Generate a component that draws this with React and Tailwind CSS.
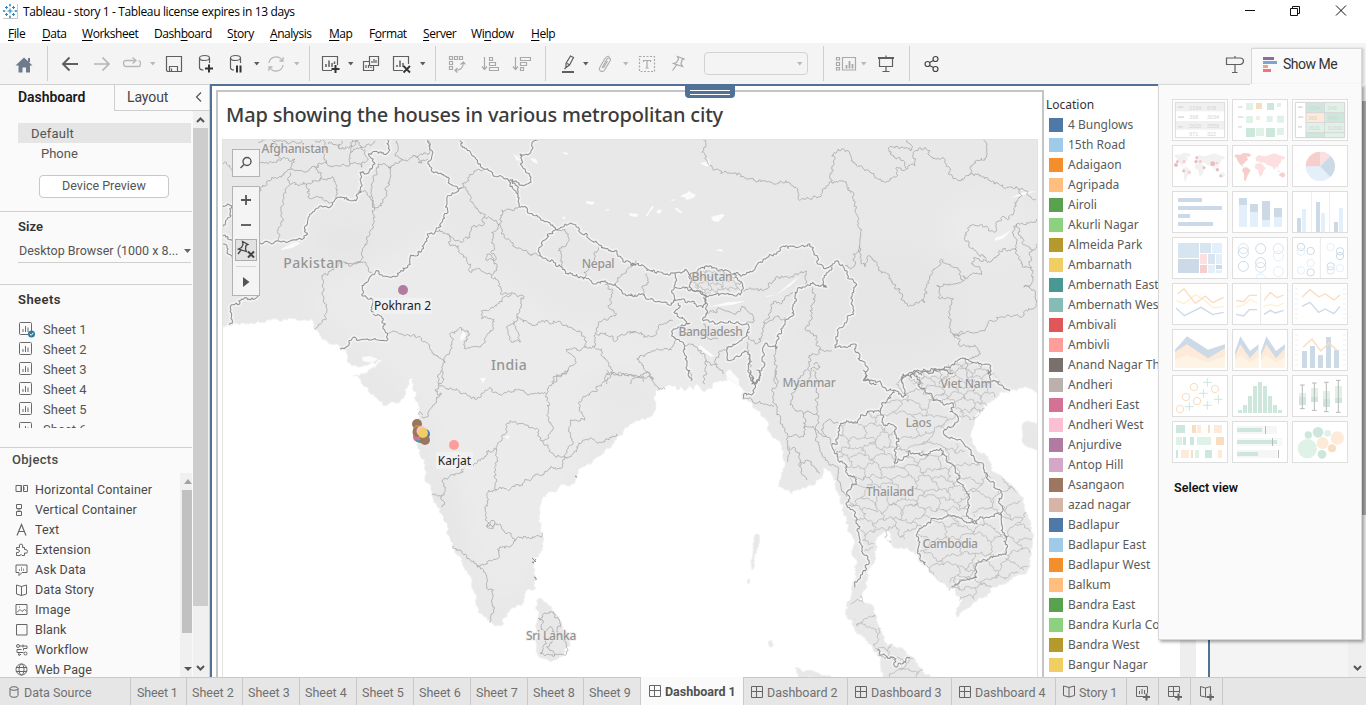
import React from 'react';

/* ---------- map geometry ---------- */

function rng(seed) {
  let s = seed;
  return () => {
    s = (s * 16807) % 2147483647;
    return s / 2147483647 - 0.5;
  };
}

const parse = (str) => str.trim().split(/\s+/).map((p) => p.split(',').map(Number));

// Subdivides every segment with a random midpoint shift so that lines look like surveyed borders.
// The shift is capped for long segments, which keeps the general course of the line.
function jag(points, seed, amp) {
  const r = rng(seed);
  const out = [points[0]];
  const split = (a, b, depth) => {
    const dx = b[0] - a[0];
    const dy = b[1] - a[1];
    const len = Math.hypot(dx, dy);
    if (len < 2.2 || depth > 6) {
      out.push(b);
      return;
    }
    const k = r() * Math.min(amp * 3.2, 4.5 / len);
    const m = [(a[0] + b[0]) / 2 - dy * k, (a[1] + b[1]) / 2 + dx * k];
    split(a, m, depth + 1);
    split(m, b, depth + 1);
  };
  for (let i = 1; i < points.length; i++) split(points[i - 1], points[i], 0);
  return out.map((p, i) => (i ? 'L' : 'M') + p[0].toFixed(1) + ' ' + p[1].toFixed(1)).join('');
}

// Border sheets are digitised in thirds of a unit from a local origin.
const sheet = (ox, oy, lines, seed, amp) =>
  lines.map((l, i) => jag(parse(l).map(([x, y]) => [ox + x / 3, oy + y / 3]), seed + i * 77, amp)).join('');

const MAINLAND = jag(parse(`222,326 245,324 262,322 290,318 312,319 315,329 328,342 343,349 347,361 358,367 370,364 382,360 376,368 364,373 353,376
 369,392 385,406 396,403 403,398 407,388 409,380 413,379 417,393 419,410 420,417 414,423 413,433 417,441 420,450 425,470 432,495 440,508 448,530 453,547
 463,563 472,580 478,607 487,620 495,626 503,622 510,610 522,605 527,590 536,588 535,570 533,562 538,557 543,537 540,513 542,498 547,493 555,492 560,485
 575,483 578,473 592,463 605,450 617,437 632,423 653,413 655,392 675,385 678,390 681,385 685,391 688,386 693,390 697,384 700,387 704,392 708,389 717,382 730,378 738,385 745,398 763,417 772,437 782,447 785,467
 778,487 792,494 807,487 822,478 823,468 833,477 838,493 842,510 848,527 853,547 855,570 854,583 850,600 847,617 852,625 863,637 873,650 880,663 883,679
 932,679 918,665 912,657 900,647 887,645 882,633 877,617 872,605 863,603 862,593 867,573 875,557 877,537 884,532 890,533 893,547 907,547 917,555 930,573 940,582 953,587
 960,597 957,617 967,608 987,597 990,588 1010,580 1030,567 1033,543 1030,520 1023,500 1010,485 993,472 983,453 972,442 975,420 987,403 1000,392
 1010,391 1023,388 1040,393`), 41, 0.18) + 'L1040 137L220 137Z';

const ISLANDS = [
  '537,600 541,598 547,603 554,612 562,624 569,636 570,646 563,656 550,662 540,658 536,645 536,628 539,613 537,600',
  '1022,425 1030,422 1038,423 1038,450 1028,447 1022,440 1022,425',
  '795,668 803,672 815,672 830,675 836,679 800,679 795,668',
  '756,534 758,534 757,550 754,560 752,570 751,563 753,548 756,534',
  '748,579 750,580 749,584 747,583 748,579',
  '769,641 772,641 773,646 770,647 769,641',
].map((s, i) => jag(parse(s), 91 + i, 0.12) + 'Z').join('');

const HEAVY =
  sheet(215, 84, [
    '135,477 170,480 188,470 230,468 278,450 280,400 310,372 350,365 372,340 415,350 430,330 435,265 462,262 480,240 475,225 460,210 490,208 520,205 522,188 518,168',
    '22,362 50,370 48,395 24,430', '22,460 52,470', '24,480 36,508 52,522',
    '130,637 80,645 74,660 55,662 50,690 42,722',
    '640,168 645,230 650,262 700,280 700,296 738,312 698,335 698,380 663,438 637,450 620,500 585,520 578,545 555,565 510,577 500,572 490,560 472,572 442,612 440,632 468,642 475,690 500,698 518,748 515,770 490,768 402,770 400,785 375,795',
    '735,170 738,185 780,220 808,256 835,275 870,285 887,296 908,330 912,365 960,395 1000,415 1022,436 1050,420 1090,430 1150,480 1200,500 1230,535 1262,545',
    '880,290 925,305 946,285 930,255 916,240 915,210 948,200 950,180 968,168',
    '1022,436 998,450 975,490 975,515 1040,550 1060,570 1105,585 1140,600 1170,590 1200,600 1230,630 1262,632',
    '890,285 908,330',
  ], 500, 0.25) +
  sheet(630, 84, [
    '0,543 60,560 100,570 130,568 165,556 176,570 180,600 225,632 335,625 335,595 310,570 270,558 240,545 205,555 180,585',
    '310,570 335,576 370,560 400,525 440,510 465,488 540,480 560,535 600,548 622,530 645,560 662,585 672,595 672,680 625,735 615,792 675,780 690,830 712,848 700,890 740,900',
    '135,568 132,610 130,650', '135,610 180,620 222,632 218,672',
    '0,630 60,645 130,655 165,650 218,672', '145,657 132,685 180,718 135,735 133,760 165,785 170,830 185,890',
    '220,640 220,710 255,720 350,720 358,745 325,775 295,788 298,830 325,818 345,800 355,850 365,900 388,880 402,785 438,795',
    '438,795 465,710 490,680 495,625 530,605 580,600 590,610 583,575 605,548',
    '820,900 820,870 845,882 862,858 900,862 960,850 1005,822 1080,850 1075,872',
  ], 900, 0.25) +
  sheet(700, 370, [
    '150,0 155,75 135,70 133,88', '170,0 180,25 165,42 155,20',
    '490,0 495,30 545,45 560,62 583,60 610,82 610,50 605,20 638,10 700,92 760,100 750,125 775,150 730,185 790,220 850,290 870,335 905,370 905,435 840,440 832,462 780,445 700,445 652,490 655,535 675,585',
    '638,10 665,15 700,2 760,8', '860,0 870,25 930,62',
    '583,60 552,98 540,125 500,130 472,158 422,160 412,222 395,225 440,300 470,343 455,350 438,402 480,470 488,530 508,578 465,635 465,652',
    '540,125 550,160 588,172 592,230 583,278 630,242 690,250 722,235 765,290 772,335 808,372 805,440 825,462',
    '905,435 910,552 860,572 828,580 830,622 800,630 755,648',
    '530,840 540,855 580,862 585,890 610,880 630,862',
  ], 1300, 0.25);

const LIGHT =
  sheet(215, 84, [
    '22,240 45,245 60,275', '130,325 165,290 200,280 230,255 270,265 310,245 335,240 350,250 365,245 405,240 408,205 430,170',
    '230,255 240,225 200,225 170,235 130,245', '225,300 225,265', '190,468 200,400 205,330 240,295 275,300 300,290 355,280 368,330 365,345',
    '275,300 280,335 310,340 350,355', '310,245 315,290', '340,180 375,195 405,190', '375,195 380,170', '405,240 440,250 460,225 440,190 405,205',
    '130,175 180,172 220,180 260,170', '180,172 200,225', '300,170 330,180 335,240', '405,190 420,170 440,190 460,180 480,170',
    '430,330 455,325 475,350 480,372', '640,170 636,210 600,215 560,225 520,250 525,300 515,320 500,365 480,372 465,440 450,480 445,520 435,535 388,535',
    '480,372 470,300 490,240 530,250', '545,170 540,215 560,225', '600,215 610,235 640,225', '435,535 455,545 472,568',
    '435,535 390,535 320,575 325,650 335,685 322,715 298,735',
    '738,312 755,295 765,270 785,258 808,256',
    '738,312 760,330 775,360 810,390 808,420 770,435 765,460 725,470 700,450 663,440', '808,400 850,422 860,378 900,372 912,370',
    '850,422 860,450 900,490 940,510 975,515', '850,422 830,445 830,500 845,560 830,575 795,555 770,565 768,540 740,510 730,485 705,485 697,450',
    '815,520 825,510 835,530 815,530 815,520', '1022,436 1060,450 1055,480 1030,500 1040,550', '830,575 850,605 855,628 890,625 928,640 905,700 960,725 980,710 1040,720 1100,745 1115,790 1140,785 1145,750 1205,770 1262,740',
    '890,628 800,680 800,705 838,712 825,740 810,770 750,795 765,750 735,730 710,745 705,800 692,835', '905,700 880,725 885,760 915,775 910,745 895,710',
    '1170,600 1190,640 1180,670 1205,690 1150,715 1140,750', '520,748 560,750 620,765 650,800 690,835 672,900', '1115,790 1055,795 1080,830 1060,860 1025,872 1015,900',
    '1140,785 1175,830 1190,870 1175,900', '1190,870 1262,880', '1200,600 1225,570 1262,530', '1105,585 1120,550 1150,490',
  ], 2100, 0.27) +
  sheet(630, 84, [
    '220,168 222,190 215,205 235,240 255,257 330,270 350,285 400,290 440,300 468,290 498,310 505,340 540,345 575,335 605,292 650,300 670,350 685,400 688,485 690,520 705,548 715,515 740,535 750,560 775,570 800,615 835,668 885,655 890,600 915,555 935,525 960,540 990,560 1002,590 1000,575 1055,572 1050,550 1025,540 1030,522 1070,530 1125,492 1160,500 1180,550 1205,550',
    '605,292 610,245 605,215 625,195 655,200 680,245 720,265 770,292 795,280 800,250 830,255 825,240 780,210 780,188 840,200 845,185 830,168',
    '830,255 855,245 850,205 885,190 900,215 945,230 955,270 990,290 1015,275 1030,240 1065,228 1070,190 1060,168',
    '1015,275 1080,290 1130,310 1165,315 1218,345', '1165,315 1165,345 1140,395 1115,400 1090,443 1060,430 1020,425 1005,470 1020,490 1070,525',
    '1160,500 1160,420 1220,405', '1160,420 1165,450 1200,490 1205,600 1182,610 1215,620 1215,670 1175,700 1100,700 1050,740 968,750 960,690 970,645 925,640 920,605 1000,590',
    '1000,745 970,750 985,780 1040,790 1045,815 1010,825', '690,485 670,510 668,550 645,545', '1218,480 1205,500',
    '340,622 400,620 430,590 500,570 530,562 525,600', '545,610 540,680 530,740 560,755 570,795 605,800', '490,625 430,660 400,715 380,780 355,765 350,745', '400,715 465,700',
    '225,690 260,680 320,685 345,670 370,715 350,720', '0,750 50,760 100,720 128,710', '130,760 125,790 50,810 20,825 40,850 70,885 20,880 0,900',
    '50,568 40,635', '165,785 200,790 225,835 260,840 280,870', '295,788 270,800 260,840', '225,835 225,900', '350,775 360,850', '438,795 435,900', '570,795 535,820 530,900', '550,840 570,850 545,860',
    '220,720 220,750 240,765 265,765', '850,870 880,900', '960,850 950,880 930,900', '1005,822 1010,870 1040,900',
  ], 3300, 0.27) +
  sheet(320, 370, [
    '365,0 355,45 385,60 420,70 470,88 510,52 535,72 600,60 680,72 700,20 745,0', '355,45 345,60 365,70 345,100 325,135 305,140', '298,135 300,125 308,135',
    '680,72 685,130 700,175 668,215 710,262 735,262 805,210 840,215 890,192', '668,215 650,175 615,165 570,152 545,200 530,240 530,360 505,362 495,410 500,470 545,470 582,505 570,530 540,530 535,565 490,585 450,570 400,528',
    '530,235 505,240 470,280 430,305 375,325 365,375 335,372', '365,375 365,412', '530,360 570,360 625,330 680,305 720,295 735,262', '582,512 620,505 668,488',
    '470,585 500,620 500,655 520,660 520,720 510,758', '735,262 755,225 750,150 795,150 775,100 830,65 860,10 895,15 955,20 990,10 1000,35 1035,58', '955,20 970,35', '505,460 525,455 520,475 505,475 505,460',
    '655,745 700,725 720,760 715,790 740,820 740,850', '655,745 670,780 690,770 700,800', '670,800 660,850 700,860 740,850', '700,800 680,830 700,860',
    '860,0 860,15', '1105,0 1112,32',
  ], 4700, 0.27) +
  sheet(700, 370, [
    '225,0 222,90 265,200 262,275', '135,85 170,100 205,105 222,110', '265,200 310,200 315,170 310,130 350,130 345,90 355,80 340,0', '310,130 270,105 275,70 320,0',
    '265,230 300,250 300,290 320,330', '300,290 320,270 345,295 360,310', '310,175 345,178 375,270 415,300 440,380', '350,130 350,180 380,200 395,225', '380,200 370,170 385,150 415,160',
  ], 6100, 0.25);

// Small administrative districts: a shaken honeycomb that is clipped to the country.
function districts(x0, y0, x1, y1, size, seed) {
  const r = rng(seed);
  const pts = [];
  const cols = Math.ceil((x1 - x0) / size) + 1;
  const rows = Math.ceil((y1 - y0) / size) + 1;
  for (let j = 0; j < rows; j++) {
    pts.push([]);
    for (let i = 0; i < cols; i++)
      pts[j].push([x0 + i * size + r() * size * 0.85, y0 + j * size + ((i + j) % 2 ? 1 : -1) * size * 0.2 + r() * size * 0.8]);
  }
  let d = '';
  let s = seed;
  for (let j = 0; j < rows; j++)
    for (let i = 0; i < cols; i++) {
      s += 13;
      if (i + 1 < cols) d += jag([pts[j][i], pts[j][i + 1]], s, 0.22);
      if (j + 1 < rows && (i + j) % 2) d += jag([pts[j][i], pts[j + 1][i]], s + 5, 0.22);
    }
  return d;
}
const poly = (s) => 'M' + s.trim().split(/\s+/).join('L') + 'Z';
const AREAS = [
  [poly('842,423 857,422 867,412 880,412 884,425 896,430 895,462 912,452 940,448 955,467 957,482 969,494 968,517 933,518 917,533 893,545 877,532 872,550 866,560 862,535 846,505 852,482 835,450'), districts(830, 405, 975, 565, 10.5, 7)],
  [poly('890,392 903,375 912,372 935,402 953,403 958,420 943,432 985,468 1002,495 1002,515 976,520 958,482 940,448 910,450 897,460 896,430 880,412'), districts(880, 370, 1005, 525, 16, 17)],
  [poly('905,375 935,368 965,360 990,368 1005,388 990,402 975,420 960,420 945,402 930,402'), districts(900, 355, 1010, 425, 8, 27)],
  [poly('1002,475 1014,488 1030,520 1032,545 1028,568 990,588 965,606 940,582 960,575 978,560 1004,552 1002,510'), districts(935, 470, 1035, 610, 12, 37)],
  [poly('918,533 935,518 1002,515 1003,552 978,562 975,580 950,583 930,573 918,550'), districts(915, 512, 1008, 590, 14, 47)],
  [poly('690,275 705,270 730,272 742,282 741,291 705,294 690,284'), districts(686, 266, 745, 296, 6, 57)],
  [poly('850,602 862,595 864,603 872,606 878,625 884,640 908,652 930,678 886,678 875,648 858,630'), districts(845, 590, 935, 680, 14, 67)],
];

const LAKES = [
  'M281 249l14-7 6 1-9 5-11 2z', 'M362 357l8-1 8 3-6 4-9-2z', 'M513 153l8 7-4 1z', 'M530 158l6 1 2 5-5-2z', 'M562 152l7 1-3 2z', 'M586 201l9 1-3 3-6-2z', 'M604 210l6-1-2 2z', 'M629 213l9 1-1 3-7-1z',
  'M646 216l6-10 2 1-5 6-1 3z', 'M656 212l3-3 3 2-3 3z', 'M674 208l3 0 6 5-3 0z', 'M684 194l3-1 2-2 3 2 4 2-3 3-6 2-3-3-4 0z', 'M711 217l11-3 3 1-7 7-5-1z', 'M700 163l6-1 3-4 1 8-5 0z', 'M670 200l6-1-3 2z',
  'M715 250l6-1 3 3-5-1z', 'M562 219l2-3 2 3z', 'M766 296l10-1 14-12 10-7-9 9-15 10-9 2z', 'M708 307l20-5 18-1-14 4z', 'M700 345l14 11-3 1-13-9z', 'M726 372l4-3 3 4 6 6v10l-14 0 2-8z', 'M1010 198l14-6 12-1-12 4z',
  'M995 238l8-3 8-5-7 8-9 3z', 'M460 338l4-8 2 6-5 5z', 'M480 378l6 0-3 5z', 'M504 436l6 0-2 3z', 'M505 487l7 3-4 1z',
].join('');

const LABELS = [
  ['Afghanistan', 295, 153, 12, -0.25], ['Pakistan', 313.5, 268, 14, 0.45], ['India', 509, 370, 14, 0.4], ['Nepal', 598, 268, 12, -0.25], ['Bhutan', 712, 280.5, 12, -0.15],
  ['Bangladesh', 710.5, 336, 12, -0.35], ['Myanmar', 809, 386.5, 12, -0.3], ['Viet Nam', 966, 387.5, 12, -0.2], ['Laos', 918.5, 427, 12, -0.1], ['Thailand', 890, 496, 12, -0.2],
  ['Cambodia', 950, 548, 12, -0.4], ['Sri Lanka', 551, 640, 12, -0.25],
];

const MARKS = [
  [403, 290, '#b07aa1'], [454, 445, '#ff9d9a'], [417, 424, '#9c755f'], [418, 430, '#b6992d'], [418, 437, '#d37295'], [420, 438, '#499894'], [418.5, 435.5, '#d37295'], [425, 434, '#4e79a7'],
  [417.5, 432, '#9c755f'], [425, 440, '#9c755f'], [421.5, 431, '#fabfd2'], [423, 433, '#f1ce63'],
];

function MapView() {
  return (
    <svg className="block" width="816" height="538" viewBox="222 139 816 538">
      <defs>
        <filter id="soft" x="-50%" y="-50%" width="200%" height="200%"><feGaussianBlur stdDeviation="12" /></filter>
        <clipPath id="land"><path d={MAINLAND} /></clipPath>
        {AREAS.map(([a], i) => <clipPath key={i} id={'area' + i}><path d={a} /></clipPath>)}
      </defs>
      <rect x="222" y="139" width="816" height="538" fill="#fff" />
      <path d={MAINLAND + ISLANDS} fill="#e8e8e8" stroke="#f1f1f1" strokeWidth="1" />
      <g clipPath="url(#land)">
        <g filter="url(#soft)">
          <path d="M440 230L560 320 720 350 700 400 600 420 540 560 500 610 460 520 425 400 360 340 300 300Z" fill="#ebebeb" />
          <ellipse cx="985" cy="230" rx="45" ry="32" fill="#ebebeb" />
          <ellipse cx="620" cy="390" rx="40" ry="16" fill="#e7e7e7" />
          <ellipse cx="450" cy="520" rx="8" ry="45" fill="#e4e4e4" />
          <ellipse cx="880" cy="300" rx="90" ry="60" fill="#e6e6e6" />
          <ellipse cx="345" cy="240" rx="26" ry="12" fill="#e4e4e4" />
        </g>
        <path d={LAKES} fill="#fbfbfb" />
      </g>
      <g fill="none" strokeLinejoin="round">
        <path d={HEAVY} stroke="#f2f2f2" strokeWidth="4.5" />
        {AREAS.map((a, i) => <path key={i} d={a[1]} clipPath={`url(#area${i})`} stroke="#b5b5b5" strokeWidth="0.75" />)}
        <path d={LIGHT} stroke="#a6a6a6" strokeWidth="0.8" />
        <path d={HEAVY} stroke="#929292" strokeWidth="1.05" />
        <path d="M222.5 677V139.500H1037.500V677" stroke="#e2e2e2" />
        <path d="M532 558l4 4m-3 1l3-4m-4 3l2 1M534 577l2 1v2M575 476l2 1" stroke="#888" />
      </g>
      {LABELS.map(([t, x, y, s, k]) => (
        <text key={t} x={x} y={y} fontSize={s} letterSpacing={k} textAnchor="middle" fontFamily="'Noto Sans', sans-serif" fontWeight="500" fill="#949494" stroke="#ececec" strokeWidth="2" strokeOpacity=".6" paintOrder="stroke">{t}</text>
      ))}
      <g fill="#f3f3f3" fillOpacity=".7"><rect x="373" y="298" width="59" height="16" /><rect x="436" y="452" width="37" height="17" /></g>
      <g fontSize="12" textAnchor="middle" fontFamily="'Noto Sans', sans-serif" fill="#222">
        <text x="402.500" y="310">Pokhran 2</text><text x="454.500" y="465">Karjat</text>
      </g>
      {MARKS.map(([x, y, c], i) => <circle key={i} cx={x} cy={y} r="5" fill={c} />)}
    </svg>
  );
}

/* ---------- small parts ---------- */

const Sep = ({ className }) => <div className={`h-[35px] w-px bg-[#cfcfcf] ${className}`} />;
const Caret = ({ dim }) => (
  <div className="flex w-3 justify-center pl-px pt-px">
    <svg width="6" height="4" viewBox="0 0 6 4"><path d="M0 0H5.500L2.750 3.500Z" fill={dim ? '#b8b8b8' : '#5c5c5c'} /></svg>
  </div>
);
const Cell = ({ className, w = 20, h = 20, children, color = '#5f5f5f' }) => (
  <div className={`flex shrink-0 items-center justify-center ${className}`}>
    <svg width={w} height={h} viewBox={`0 0 ${w} ${h}`} fill="none" stroke={color} strokeWidth="1.2">{children}</svg>
  </div>
);

function Toolbar() {
  return (
    <div className="flex h-[41px] items-center bg-[#f4f4f4] pl-0">
      <Cell className="w-[47px] pt-0.5" color="none" w={18} h={18}><path d="M9 1.500L17.500 9.500H15V16.500H11V11.500H7.500V16.500H3.500V9.500H.5Z" fill="#6f7b8b" /><path d="M13 2h2v4h-2z" fill="#6f7b8b" /></Cell>
      <Sep />
      <Cell className="w-[44px] pt-px" w={18} h={16}><path d="M17 8H2M8.500 1.500L2 8l6.500 6.500" strokeWidth="1.900" /></Cell>
      <Cell className="w-5 pt-px" w={18} h={16} color="#b5b5b5"><path d="M1 8H16M9.500 1.500L16 8l-6.500 6.500" strokeWidth="1.700" /></Cell>
      <Cell className="ml-1.5 w-7" w={20} h={14} color="#b8b8b8"><path d="M13 3.500H4Q1.500 3.500 1.500 6.500T4 9.500H16.500Q18.500 9.500 18.500 6.500T16.500 4M10.500 .5L14 3.500L10.500 6.500" strokeWidth="1.300" /></Cell>
      <Caret dim />
      <Cell className="w-8 pt-px" w={18} h={18}><path d="M1.500 1.500H16.500V16.500H2.500L1.500 15.500ZM4.500 16V11.500H12.500V16M6.500 13.500V16" /></Cell>
      <Cell className="w-8 pt-px" w={18} h={20}><ellipse cx="7.500" cy="4" rx="5" ry="2.500" /><path d="M2.500 4V14Q3 16 6.500 16M12.500 4V9" /><path d="M12 10.500V18.500M8 14.500H16" stroke="#333" strokeWidth="2" /></Cell>
      <Cell className="w-7 pt-px" w={16} h={20}><ellipse cx="7.500" cy="4" rx="5" ry="2.500" /><path d="M2.500 4V14Q3 16 6 16M12.500 4V9" /><path d="M9 11.500V18.500M12.500 11.500V18.500" stroke="#333" strokeWidth="2" /></Cell>
      <Caret />
      <Cell className="w-7" w={18} h={18} color="#b8b8b8"><path d="M2 8A7 7 0 0 1 15 5.500M16 10A7 7 0 0 1 3 12.500M16 2V6H12.500M2 16V12H5.500" strokeWidth="1.300" /></Cell>
      <Caret dim />
      <Sep className="ml-[7px]" />
      <Cell className="ml-2 w-[26px] pt-px" w={20} h={20}><path d="M11 16.500H2Q1.500 16.500 1.500 16V2.500H16.500V11" /><path d="M5 10V13M8 6.500V13M11 9V13M13.500 7.500V10" strokeWidth="1.500" /><path d="M14.500 11V19M10.500 15H18.500" stroke="#333" strokeWidth="2" /></Cell>
      <Caret />
      <Cell className="w-[30px]" w={18} h={18}><path d="M7.500 1.500H16.500V10.500H7.500ZM7 6.500H1.500V15.500H11.500V11" /><path d="M10 6V8M12 4V8M14 5V8M4 10V13M6.500 10V13M9 11.500V13" /></Cell>
      <Cell className="ml-0.5 w-7 pt-px" w={20} h={20}><path d="M11 16.500H2Q1.500 16.500 1.500 16V2.500H16.500V10" /><path d="M5 11V13M8 6.500V13M11 9V13" strokeWidth="1.500" /><path d="M11.500 12L18 18.500M18 12L11.500 18.500" stroke="#333" strokeWidth="1.800" /></Cell>
      <Caret />
      <Sep className="ml-[7px]" />
      <Cell className="w-[42px]" w={18} h={18} color="#a9a9a9"><path d="M1.500 1.500h3v3h-3zM6.500 1.500h3v3h-3zM11.500 1.500h3v3h-3zM1.500 6.500h3v3h-3zM1.500 11.500h3v3h-3zM7 15.500Q15 15.500 15.500 7.500M12.500 9.500L15.500 7L17.500 9.500M9.500 13L7 15.500L9.500 17.500" /></Cell>
      <Cell className="w-6" w={18} h={18} color="#a9a9a9"><path d="M3.500 2V14M1 11.500L3.500 14.500L6 11.500M8.500 2.500h3v3h-3zM8.500 7.500h6v3h-6zM8.500 12.500h9v3h-9z" /></Cell>
      <Cell className="ml-1 w-8" w={20} h={18} color="#a9a9a9"><path d="M3.500 2V14M1 11.500L3.500 14.500L6 11.500M8.500 2.500h10v3h-10zM8.500 7.500h6v3h-6zM8.500 12.500h3v3h-3z" /></Cell>
      <Sep className="ml-[7px]" />
      <Cell className="ml-[11px] w-[22px] pt-px" w={14} h={20}><path d="M9.500 2L12.500 3.500L8.500 11L5 13.500L5 9.500ZM6 9.500L9 11M5 13.500L3.500 15" /><path d="M1 18H13" strokeWidth="2" /></Cell>
      <Caret />
      <Cell className="w-7" w={14} h={18} color="#b0b0b0"><path d="M4 13L9 4Q10.500 2 12 3.500Q13 4.500 12 6L7 14.500Q5 17.500 2.500 16Q.5 14.500 2 12L7 3.500Q9 .5 11.500 1.500M9.500 6L5.500 13" /></Cell>
      <Caret dim />
      <Cell className="w-8" w={18} h={18} color="#a9a9a9"><path d="M1.500 1.500H16.500V16.500H1.500Z" strokeDasharray="2 1.500" /><path d="M5.500 7V5.500H12.500V7M9 5.500V13M7.500 13H10.500" /></Cell>
      <Cell className="w-[29px]" w={14} h={18} color="#a9a9a9"><path d="M6.500 1.500L13 4L11 5L10 9L11.500 11.500L2.500 8.500L5.500 7.500L7.500 4ZM5.500 10L1.500 15.500" /></Cell>
      <div className="ml-3 flex h-[23px] w-[104px] items-center justify-end rounded-sm border border-[#d2d2d2] pr-0.5"><Caret dim /></div>
      <Sep className="ml-[15px]" />
      <Cell className="ml-[11px] w-[22px]" w={22} h={18} color="#a9a9a9"><path d="M1.500 2.500h3v2.500h-3zM1.500 7.500h3v3h-3zM1.500 12.500h3v2.500h-3zM7.500 2.500h13v12.500h-13z" /><path d="M11.500 10V13.500M14.500 6V13.500M17.500 9V13.500" strokeWidth="1.800" /></Cell>
      <Caret dim />
      <Cell className="w-[34px]" w={18} h={18}><path d="M1 3H17" strokeWidth="2" /><path d="M2.500 4V11.500H15.500V4M9 .5V2M9 11.500V16.500M5.500 16.500H12.500" /></Cell>
      <Sep className="ml-1.5" />
      <Cell className="w-[44px] pt-px" w={16} h={18} color="#444"><circle cx="3.500" cy="9" r="2.500" /><circle cx="11.500" cy="4" r="2.500" /><circle cx="11.500" cy="14" r="2.500" /><path d="M5.500 7.500L9.500 5.500M5.500 10.500L9.500 12.500" /></Cell>
      <Cell className="ml-auto w-5" w={20} h={20}><path d="M1.500 4H15.500Q18.500 4.500 18.500 7T15.500 10.500H1.500ZM10 2V4M10 10.500V18.500M7 18.500H12.500" /></Cell>
      <div className="ml-1.5 mr-1 flex h-9 w-[111px] items-center self-end border-x border-t border-[#d8d8d8] bg-[#fafafa] pb-[5px] pl-[11px] shadow-[2px_0_2px_rgba(0,0,0,0.15)]">
        <svg width="14" height="16" viewBox="0 0 14 16"><path d="M0 1h11v3H0z" fill="#8a6d99" /><path d="M0 5h14v3H0z" fill="#82a3cf" /><path d="M0 9h5v3H0z" fill="#f2a37c" /><path d="M0 13h8v3H0z" fill="#f96f7f" /></svg>
        <span className="ml-[6px] font-[Roboto,sans-serif] text-[14px] tracking-[-0.5px] text-[#333]">Show Me</span>
      </div>
    </div>
  );
}

/* ---------- left pane ---------- */

const SheetIcon = ({ used }) => (
  <svg className="shrink-0" width="17" height="17" viewBox="0 0 17 17" fill="none" stroke="#6a6a6a">
    <rect x="1.500" y="1.500" width="12" height="12" rx="1" /><path d="M5 8V11M7.500 5V11M10 6.500V11" />
    {used && <g><circle cx="13.500" cy="13" r="3.500" fill="#2d7c9e" stroke="none" /><path d="M11.800 13L13.200 14.300L15.300 11.800" stroke="#fff" /></g>}
  </svg>
);

const OBJECTS = [
  ['Horizontal Container', <path key="a" d="M1 2.500H6.500V8.500H1ZM8.500 2.500H12.500V8.500H8.500ZM6 3v5M9 4v3" />],
  ['Vertical Container', <path key="a" d="M1.500 1.500H6.500V5.500H1.500ZM1.500 8.500H6.500V12.500H1.500ZM2 5.500h4M2.500 7h3" />],
  ['Text', <path key="a" d="M2 12.500L6.500 1.500L11 12.500M3.500 8.500H9.500" strokeWidth="1.200" />],
  ['Extension', <path key="a" d="M1.500 12.500V9.500Q4.500 10 4.500 8T1.500 6.500V4.500H4.500Q3.500 1 6 1T7.500 4.500H9.500V6.500Q12.500 6 12.500 8.500T9.500 10V12.500H7Q6.500 10.500 5 12.500Z" />],
  ['Ask Data', <g key="a"><path d="M1 2H12V9.500H7L4 12.500V9.500H1Z" /><path d="M4.500 6v2M6.500 4v4M8.500 5.500V8" stroke="#999" /></g>],
  ['Data Story', <path key="a" d="M1.500 2L6.500 3.500L11.500 2V11L6.500 12.500L1.500 11ZM6.500 3.500V12.500" />],
  ['Image', <path key="a" d="M1 1.500H12V11.500H1ZM2 9.500L5 6.500L7 8.500L9.500 6.500L11.500 8M4 4h1" />],
  ['Blank', <path key="a" d="M1.500 1.500H12V12H1.500Z" />],
  ['Workflow', <g key="a"><circle cx="3" cy="3" r="1.500" /><circle cx="10.500" cy="10.500" r="1.500" /><path d="M4.500 3H12V5.500H8.500V7.500M2 6.500H6.500M2 6.500V9.500H8.500M4 9.500V12.500M3 11L4.500 12.500L6 11M8 1.500v3" /></g>],
  ['Web Page', <g key="a"><circle cx="6.500" cy="6.500" r="5.500" /><ellipse cx="6.500" cy="6.500" rx="2.500" ry="5.500" /><path d="M1 4.500H12M1 8.500H12" /></g>],
];

function SidePane() {
  return (
    <div className="flex w-[210px] shrink-0 flex-col border-r border-t border-[#cfcfcf] bg-[#fafafa] font-[Roboto,sans-serif] text-[#555]">
      <div className="flex h-[26px] shrink-0">
        <div className="w-[114px] pl-[18px] text-[14px] font-semibold leading-[25px] tracking-[-0.05px] text-[#1a1a1a]">Dashboard</div>
        <div className="flex flex-1 justify-between border-b border-l border-[#cfcfcf] pl-3 pr-[7px] text-[14px] leading-[25px] tracking-[-0.1px] text-[#444]">
          Layout
          <svg className="mt-[7px]" width="7" height="10" viewBox="0 0 7 10"><path d="M6 .5L1.500 5L6 9.500" fill="none" stroke="#555" strokeWidth="1.200" /></svg>
        </div>
      </div>
      <div className="flex min-h-0 flex-1">
        <div className="flex w-[192px] flex-col">
          <div className="ml-[18px] mr-px mt-3 h-5 bg-[#e5e5e5] pl-[13px] text-[13px] leading-[22px] tracking-[0.2px]">Default</div>
          <div className="h-5 pl-[41px] text-[13px] leading-[22px]">Phone</div>
          <div className="ml-[39px] mt-3 h-[23px] w-[130px] rounded-sm border border-[#c8c8c8] bg-white text-center text-[12.5px] leading-[20px]">Device Preview</div>
          <div className="mt-[13px] h-[73px] border-t border-[#cfcfcf] pl-[18px] pr-px">
            <div className="h-7 text-[13px] font-semibold leading-[29px] tracking-[0.1px] text-[#333]">Size</div>
            <div className="flex h-[23px] items-center justify-between border-b border-[#cfcfcf] pl-px text-[12.5px] leading-5">
              <span className="whitespace-nowrap">Desktop Browser (1000 x 8...</span>
              <svg width="7" height="4" viewBox="0 0 7 4"><path d="M0 0H7L3.500 4Z" fill="#666" /></svg>
            </div>
          </div>
          <div className="h-[163px] border-t border-[#cfcfcf] pl-[18px]">
            <div className="h-[34px] text-[13px] font-semibold leading-[30px] tracking-[0.45px] text-[#333]">Sheets</div>
            <div className="h-[109px] overflow-hidden">
              {[1, 2, 3, 4, 5, 6].map((n) => (
                <div key={n} className="flex h-5 items-center gap-2 text-[13px]"><SheetIcon used={n === 1} /><span className="pt-0.5">Sheet {n}</span></div>
              ))}
            </div>
          </div>
          <div className="flex min-h-0 flex-1 flex-col border-t border-[#cfcfcf]">
            <div className="h-[25px] pl-3 text-[13px] font-medium leading-[23px] tracking-[0.3px] text-[#4a4a4a]">Objects</div>
            <div className="flex min-h-0 flex-1">
              <div className="flex-1 overflow-hidden pl-[15px] pt-[7px]">
                {OBJECTS.map(([t, i]) => (
                  <div key={t} className="flex h-5 items-center gap-[6px] whitespace-nowrap text-[12.5px] tracking-[0.14px] text-[#484848]">
                    <svg className="shrink-0" width="14" height="14" viewBox="0 0 14 14" fill="none" stroke="#666">{i}</svg>{t}
                  </div>
                ))}
              </div>
              <div className="flex w-3 flex-col items-end bg-[#f0f0f0]">
                <svg className="mt-[6px]" width="8" height="5" viewBox="0 0 8 5"><path d="M0 5L4 0L8 5Z" fill="#a3a3a3" /></svg>
                <div className="mt-[6px] h-[143px] w-[10px] bg-[#c1c1c1]" />
                <svg className="mb-[6px] mt-auto" width="8" height="4" viewBox="0 0 8 4"><path d="M0 0H8L4 4Z" fill="#555" /></svg>
              </div>
            </div>
          </div>
        </div>
        <div className="ml-px flex w-4 flex-col bg-[#f0f0f0] pr-px">
          <svg className="ml-[3px] mt-[6px]" width="9" height="6" viewBox="0 0 9 6"><path d="M1 5L4.500 1.500L8 5" fill="none" stroke="#555" strokeWidth="2" /></svg>
          <div className="mt-[5px] h-[478px] w-[15px] bg-[#cdcdcd]" />
          <svg className="mb-[6px] ml-[3px] mt-auto" width="9" height="6" viewBox="0 0 9 6"><path d="M1 1L4.500 4.500L8 1" fill="none" stroke="#555" strokeWidth="2" /></svg>
        </div>
      </div>
    </div>
  );
}

/* ---------- legend ---------- */

const LEGEND = [
  ['4 Bunglows', 'bg-[#4e79a7]'], ['15th Road', 'bg-[#a0cbe8]'], ['Adaigaon', 'bg-[#f28e2b]'], ['Agripada', 'bg-[#ffbe7d]'], ['Airoli', 'bg-[#59a14f]'],
  ['Akurli Nagar', 'bg-[#8cd17d]'], ['Almeida Park', 'bg-[#b6992d]'], ['Ambarnath', 'bg-[#f1ce63]'], ['Ambernath East', 'bg-[#499894]'], ['Ambernath West', 'bg-[#86bcb6]'],
  ['Ambivali', 'bg-[#e15759]'], ['Ambivli', 'bg-[#ff9d9a]'], ['Anand Nagar Thane', 'bg-[#79706e]'], ['Andheri', 'bg-[#bab0ac]'], ['Andheri East', 'bg-[#d37295]'],
  ['Andheri West', 'bg-[#fabfd2]'], ['Anjurdive', 'bg-[#b07aa1]'], ['Antop Hill', 'bg-[#d4a6c8]'], ['Asangaon', 'bg-[#9d7660]'], ['azad nagar', 'bg-[#d7b5a6]'],
  ['Badlapur', 'bg-[#4e79a7]'], ['Badlapur East', 'bg-[#a0cbe8]'], ['Badlapur West', 'bg-[#f28e2b]'], ['Balkum', 'bg-[#ffbe7d]'], ['Bandra East', 'bg-[#59a14f]'],
  ['Bandra Kurla Complex', 'bg-[#8cd17d]'], ['Bandra West', 'bg-[#b6992d]'], ['Bangur Nagar', 'bg-[#f1ce63]'],
];

/* ---------- Show Me thumbnails, drawn on a 168 x 126 grid ---------- */

const G1 = '#cde7dc';
const G2 = '#e0f2e8';
const O1 = '#fadcc0';
const O2 = '#feead8';
const B1 = '#ccdae7';
const B2 = '#e3f0fb';
const R1 = '#f6cfcd';
const R2 = '#fddfdf';
const Rects = ({ list }) => list.map(([x, y, w, h, c], i) => <rect key={i} x={x} y={y} width={w} height={h} fill={c} />);
const Rings = ({ list, r = 11 }) => list.map(([x, y, c], i) => <circle key={i} cx={x} cy={y} r={r} fill="none" stroke={c} strokeWidth="3" />);
const Num = ({ x, y, children }) => <text x={x} y={y} fontSize="16" fill="#d4d4d4" fontFamily="'Liberation Sans', sans-serif">{children}</text>;
const World = ({ a, b }) => (
  <g>
    <path d="M7 34L12 28L24 30L34 24L50 25L58 30L50 36L44 34L48 44L38 52L36 58L30 56L36 66L26 60L18 50L14 40ZM34 68L44 66L56 76L50 86L46 94L40 110L36 104L36 88L30 76Z" fill={a} />
    <path d="M72 44L70 38L80 30L90 32L100 34L112 30L126 25L140 30L160 36L154 44L148 42L148 50L142 58L138 66L140 74L132 64L127 76L122 66L114 62L106 60L100 54L92 52L86 54L80 48L74 52ZM70 58L82 54L92 58L96 66L102 68L94 78L92 88L84 96L80 84L78 74L68 70Z" fill={b} />
    <path d="M140 90L146 84L156 82L160 92L152 98L146 94ZM134 76L146 80L142 82Z" fill={a} />
  </g>
);

const THUMBS = [
  <g key="0"><Rects list={[[9, 9, 150, 28, '#f0f0f0'], [9, 66, 150, 26, '#f0f0f0'], [18, 22, 16, 5, '#ddd'], [18, 52, 18, 5, '#ddd'], [18, 81, 14, 5, '#ddd']]} /><rect x="10" y="10" width="148" height="106" fill="none" stroke="#dcdcdc" strokeWidth="3" /><Num x="52" y="32">1234</Num><Num x="105" y="32">678</Num><Num x="52" y="60">368</Num><Num x="105" y="60">3034</Num><Num x="52" y="86">2620</Num><Num x="105" y="86">2559</Num><Num x="52" y="110">971</Num><Num x="105" y="110">322</Num></g>,
  <Rects key="1" list={[[18, 22, 14, 5, '#e2e2e2'], [18, 52, 16, 5, '#e2e2e2'], [18, 81, 12, 5, '#e2e2e2'], [42, 12, 21, 21, G2], [72, 12, 18, 18, O1], [105, 12, 21, 21, G1], [135, 12, 12, 12, G2], [42, 51, 21, 21, G2], [72, 51, 12, 12, O2], [104, 51, 18, 18, G2], [135, 50, 21, 21, G2], [42, 87, 27, 27, G1], [72, 87, 24, 24, G2], [102, 87, 27, 27, G1], [135, 87, 21, 21, G2]]} />,
  <g key="2"><Rects list={[[42, 12, 54, 28, G1], [100, 12, 58, 28, G2], [42, 42, 54, 28, O2], [100, 42, 58, 28, G1], [42, 73, 54, 26, G2], [100, 73, 58, 26, G2], [42, 102, 54, 14, G1], [100, 102, 58, 14, G2], [18, 22, 14, 5, '#ddd'], [18, 52, 16, 5, '#ddd'], [18, 81, 12, 5, '#ddd']]} /><path d="M10 10H158V116H10ZM98 10V116M42 10V116M42 41H158M42 71H158M42 101H158" fill="none" stroke="#d4d4d4" strokeWidth="3" /><Num x="48" y="32">1234</Num><Num x="108" y="32">546</Num><Num x="48" y="62">368</Num><Num x="108" y="62">340</Num><Num x="48" y="92">2620</Num><Num x="108" y="92">51890</Num></g>,
  <g key="3"><World a="#f1f1f1" b="#f1f1f1" />{[[12, 60, 6], [16, 50, 4], [36, 50, 5], [74, 38, 4], [72, 50, 5], [85, 50, 5], [96, 68, 4], [122, 56, 7], [134, 54, 4], [136, 74, 5], [35, 78, 4], [52, 82, 5], [146, 93, 4]].map(([x, y, r], i) => <circle key={i} cx={x} cy={y} r={r} fill={i % 3 === 2 ? '#f6cdd0' : '#ecb9be'} />)}</g>,
  <World key="4" a={R1} b={R2} />,
  <g key="5"><circle cx="85" cy="64" r="44" fill={B2} /><path d="M85 64H41A44 44 0 0 1 85 20Z" fill={R1} /><path d="M85 64V20A44 44 0 0 1 116 33Z" fill={R2} /><path d="M85 64L116 33A44 44 0 0 1 115 96Z" fill={B1} /></g>,
  <Rects key="6" list={[[18, 21, 72, 12, B1], [18, 45, 132, 12, B1], [18, 69, 36, 12, B1], [18, 93, 105, 12, B1]]} />,
  <Rects key="7" list={[[21, 21, 24, 21, B1], [21, 42, 24, 66, B2], [54, 39, 24, 24, B1], [54, 63, 24, 45, B2], [90, 30, 24, 57, B1], [90, 87, 24, 21, B2], [126, 51, 24, 27, B1], [126, 78, 24, 30, B2]]} />,
  <Rects key="8" list={[[57, 3, 2, 120, '#e8e8e8'], [111, 3, 2, 120, '#e8e8e8'], [15, 81, 12, 42, B1], [30, 54, 12, 69, B2], [72, 33, 12, 90, B1], [87, 66, 12, 57, B2], [126, 93, 12, 30, B1], [141, 51, 12, 72, B2]]} />,
  <Rects key="9" list={[[18, 18, 63, 45, '#d7e5f1'], [18, 66, 63, 42, B1], [84, 18, 33, 30, '#d7e5f1'], [120, 18, 30, 30, B2], [84, 51, 21, 30, R2], [108, 51, 21, 30, '#d7e5f1'], [132, 51, 18, 30, B2], [84, 84, 21, 24, R1], [108, 84, 21, 24, B2], [132, 84, 18, 12, B1], [132, 99, 18, 9, B2]]} />,
  <Rings key="10" r={15} list={[[34, 35, '#d7e5f1'], [34, 47, B1], [34, 88, B1], [86, 35, B1], [86, 77, B1], [86, 91, '#d7e5f1'], [86, 126, B2], [139, 35, '#d7e5f1'], [139, 57, B2], [139, 104, B2]]} />,
  <g key="11"><path d="M85 3V123" stroke="#e8e8e8" strokeWidth="3" /><Rings list={[[27, 30, B1], [27, 44, B2], [56, 42, B1], [56, 78, B2], [27, 100, B2], [56, 106, B1], [116, 30, B2], [144, 43, B1], [144, 57, B1], [116, 88, B1], [116, 100, '#d7e5f1'], [144, 94, B2]]} /></g>,
  <g key="12" fill="none" strokeWidth="4"><path d="M14 53L36 62L70 35L95 50L125 75L155 70" stroke="#fff0d2" /><path d="M17 33L36 17L70 61L100 39L122 59L155 43" stroke={O1} /><path d="M12 75L37 98L87 73L122 95L155 88" stroke={B1} /></g>,
  <g key="13" fill="none" strokeWidth="4"><path d="M86 3V123" stroke="#e8e8e8" strokeWidth="3" /><path d="M12 52L35 56L52 37H75M96 52L115 28L135 44L155 36" stroke={O1} /><path d="M12 72L35 66L55 48L75 60M94 70L115 64L135 70L155 60" stroke="#fff0d2" /><path d="M12 94L35 99L52 80H75M96 94L115 82L130 90L155 82" stroke={B1} /></g>,
  <g key="14" fill="none" strokeWidth="4"><path d="M9 18h8M9 33h8M9 48h8M9 63h8M9 78h8M9 93h8M9 107h8M153 18h8M153 33h8M153 48h8M153 63h8M153 78h8M153 93h8M153 107h8" stroke="#e6e6e6" strokeWidth="2" /><path d="M30 43L54 20L81 42L99 32L126 51L144 36" stroke={O1} /><path d="M30 70L54 58L80 88L99 78L126 92L144 70" stroke={B1} /></g>,
  <g key="15"><path d="M9 62L45 22L108 62L159 46V117H9Z" fill={B1} /><path d="M9 68L45 46L108 88L159 58V117H9Z" fill={O2} /><path d="M9 92L45 78L108 100L159 82V117H9Z" fill="#fef4e6" /></g>,
  <g key="16"><path d="M9 68L25 22L54 66L80 46V117H9ZM87 68L103 22L132 66L159 46V117H87Z" fill={B1} /><path d="M9 80L25 46L54 88L80 58V117H9ZM87 80L103 46L132 88L159 58V117H87Z" fill={O2} /><path d="M9 95L25 78L54 100L80 84V117H9ZM87 95L103 78L132 100L159 84V117H87Z" fill="#fef4e6" /><path d="M83 9V117" stroke="#fff" strokeWidth="6" /></g>,
  <g key="17"><path d="M9 18h8M9 33h8M9 48h8M9 63h8M9 78h8M9 93h8M9 107h8M153 18h8M153 33h8M153 48h8M153 63h8M153 78h8M153 93h8M153 107h8" stroke="#e6e6e6" strokeWidth="2" /><Rects list={[[30, 66, 15, 51, B1], [54, 51, 15, 66, B1], [78, 78, 15, 39, B1], [102, 24, 15, 93, B1], [126, 63, 15, 54, B1]]} /><path d="M33 55L60 30L86 66L111 42L137 66" fill="none" stroke={O1} strokeWidth="4" /></g>,
  <g key="18"><Rings list={[[66, 36, O1], [129, 42, O1], [42, 66, O1], [75, 78, O1], [24, 102, O1]]} /><path d="M93 22h26M106 9v26M81 55h26M94 42v26M126 73h26M139 60v26M39 95h26M52 82v26M93 91h26M106 78v26" stroke={G1} strokeWidth="3" /></g>,
  <Rects key="19" list={[[18, 105, 12, 9, G1], [33, 90, 12, 24, G1], [48, 63, 12, 51, G1], [63, 33, 12, 81, G1], [78, 21, 12, 93, G1], [93, 33, 12, 81, G1], [108, 63, 12, 51, G1], [123, 90, 12, 24, G1], [138, 105, 12, 9, G1]]} />,
  <g key="20"><Rects list={[[21, 54, 21, 12, G2], [21, 66, 21, 24, G1], [57, 39, 21, 27, G2], [57, 66, 21, 15, G1], [93, 48, 21, 24, G2], [93, 72, 21, 24, G1], [129, 33, 21, 36, G2], [129, 69, 21, 15, G1]]} /><path d="M31 30V101M67 24V106M103 22V110M139 16V112M24 30h14M24 101h14M60 24h14M60 106h14M96 22h14M96 110h14M132 16h14M132 112h14" stroke="#b9b9b9" strokeWidth="3" /></g>,
  <Rects key="21" list={[[12, 12, 27, 24, G1], [60, 12, 12, 24, O1], [75, 12, 12, 24, O2], [108, 12, 6, 24, O1], [126, 12, 24, 24, O2], [12, 48, 18, 24, G2], [33, 48, 9, 24, G1], [54, 48, 12, 24, G1], [75, 48, 42, 24, G2], [132, 48, 24, 24, O1], [12, 87, 6, 24, G1], [27, 87, 24, 24, O2], [57, 87, 6, 24, O1], [69, 87, 12, 24, G2], [99, 87, 21, 24, G1], [138, 87, 12, 24, O2]]} />,
  <Rects key="22" list={[[15, 15, 120, 24, '#f6f6f6'], [15, 51, 135, 24, '#f8f8f8'], [15, 87, 120, 24, '#f6f6f6'], [15, 21, 75, 12, G1], [15, 57, 120, 12, G1], [15, 93, 63, 12, G1], [99, 15, 3, 24, '#b9b9b9'], [120, 51, 3, 24, '#b9b9b9'], [138, 87, 3, 24, '#b9b9b9']]} />,
  <g key="23">{[[46, 83, 29, G2], [49, 42, 11, G1], [78, 34, 16, G1], [107, 37, 10, G2], [136, 51, 20, O2], [92, 66, 18, O2], [120, 82, 12, O1], [90, 100, 13, G1]].map(([x, y, r, c], i) => <circle key={i} cx={x} cy={y} r={r} fill={c} />)}</g>,
];

function ShowMe() {
  return (
    <div className="absolute right-1 top-0 h-[556px] w-[204px] border-b border-l border-r border-[#d8d8d8] bg-[#fafafa] pl-3 pt-[15px] shadow-[2px_2px_3px_rgba(0,0,0,0.35)]">
      <div className="grid grid-cols-[56px_56px_56px] gap-1 pl-px">
        {THUMBS.map((t, i) => (
          <div key={i} className="h-[42px] border border-[#dedede] bg-white">
            <svg width="54" height="40" viewBox="3 3 162 120">{t}</svg>
          </div>
        ))}
      </div>
      <div className="mt-4 pl-[3px] font-[Roboto,sans-serif] text-[12.5px] font-semibold tracking-[0.03px] text-[#111]">Select view</div>
      <div className="absolute left-0 right-[111px] top-0 h-px bg-[#d8d8d8]" />
    </div>
  );
}

/* ---------- bottom tabs ---------- */

const GridIcon = () => <svg className="mb-[3px]" width="12" height="12" viewBox="0 0 12 12" fill="none" stroke="#666"><path d="M.5 .5H11.500V11.500H.5ZM5.500 .5V11.500M.5 5.500H11.500" /></svg>;
const BookIcon = () => <svg className="mb-[3px]" width="12" height="13" viewBox="0 0 12 13" fill="none" stroke="#666"><path d="M.5 1L6 2.500L11.500 1V10.500L6 12L.5 10.500ZM6 2.500V12" /></svg>;
const TAB = 'flex shrink-0 items-center whitespace-nowrap border-r border-[#c9c9c9] pt-[3px]';

function BottomTabs() {
  return (
    <div className="flex h-7 shrink-0 border-t border-[#c9c9c9] bg-[#e6e6e6] font-[Roboto,sans-serif] text-[12.5px] text-[#707070]">
      <div className={`${TAB} w-[131px] gap-[5px] pl-[9px]`}>
        <svg className="mb-[3px]" width="10" height="12" viewBox="0 0 10 12" fill="none" stroke="#666"><ellipse cx="5" cy="2.500" rx="4" ry="1.800" /><path d="M1 2.500V9.500Q1 11.300 5 11.300T9 9.500V2.500" /></svg>
        Data Source
      </div>
      <div className={`${TAB} w-14 pl-[6px] tracking-[-0.15px]`}>Sheet 1</div>
      {[2, 3, 4, 5, 6, 7, 8, 9].map((n) => (
        <div key={n} className={`${TAB} ${n === 2 || n === 8 ? 'w-14' : 'w-[57px]'} pl-[5px]`}>Sheet {n}</div>
      ))}
      <div className={`${TAB} -mt-px w-[103px] gap-1 bg-[#fafafa] pl-2 font-bold text-[#505050]`}><GridIcon />Dashboard 1</div>
      {[2, 3, 4].map((n) => <div key={n} className={`${TAB} w-[104px] gap-1 pl-[7px]`}><GridIcon /><span>Dashboard {n}</span></div>)}
      <div className={`${TAB} w-[71px] gap-1 pl-[7px] tracking-[-0.1px]`}><BookIcon />Story 1</div>
      <div className={`${TAB} w-8 justify-center`}><svg width="16" height="16" viewBox="0 0 16 16" fill="none" stroke="#666"><path d="M9 11.500H1.500V1.500H12.500V8" /><path d="M4.500 6V9M7 4V9M9.500 5V9" /><path d="M11.500 8.500V15.500M8 12H15" strokeWidth="2" /></svg></div>
      <div className={`${TAB} w-8 justify-center`}><svg width="16" height="16" viewBox="0 0 16 16" fill="none" stroke="#666"><path d="M8 11.500H1.500V1.500H12.500V8M6.500 1.500V11.500M1.500 6.500H12.500" /><path d="M11.500 8.500V15.500M8 12H15" strokeWidth="2" /></svg></div>
      <div className={`${TAB} w-8 justify-center`}><svg width="16" height="16" viewBox="0 0 16 16" fill="none" stroke="#666"><path d="M8 12L6.500 12L1.500 11V1.500L6.500 3L11.500 1.500V8M6.500 3V12" /><path d="M11.500 8.500V15.500M8 12H15" strokeWidth="2" /></svg></div>
    </div>
  );
}

/* ---------- window ---------- */

const MENU = [
  ['', 'F', 'ile', 'w-[34px]'], ['', 'D', 'ata', 'w-10'], ['', 'W', 'orksheet', 'w-[72px]'], ['Dash', 'b', 'oard', 'w-[73px]'], ['S', 't', 'ory', 'w-[43px]'], ['', 'A', 'nalysis', 'w-[59px]'],
  ['', 'M', 'ap', 'w-10'], ['F', 'o', 'rmat', 'w-[54px]'], ['', 'S', 'erver', 'w-12'], ['Wi', 'n', 'dow', 'w-[60px]'], ['', 'H', 'elp', 'w-10'],
];

export default function App() {
  return (
    <div className="flex h-[705px] w-[1366px] flex-col overflow-hidden bg-white">
      <div className="flex h-[23px] shrink-0 items-center pl-[3px]">
        <svg width="15" height="15" viewBox="0 0 15 15"><path d="M14.500 0V14.500H0" fill="none" stroke="#c8c8c8" /><path d="M7 4.500v5M4.500 7h5M3.500 2v3M2 3.500h3M10.500 2v3M9 3.500h3M3.500 9v3M2 10.500h3M10.500 9v3M9 10.500h3M7 0v2.500M6 1h2M7 11.500V14M6 13h2M0 7h2.500M1 6v2M11.500 7H14M13 6v2" stroke="#3585b5" strokeWidth="1.100" /></svg>
        <div className="pl-[5px] font-['Open_Sans',sans-serif] text-[12px] tracking-[-0.37px] text-black">Tableau - story 1 - Tableau license expires in 13 days</div>
        <svg className="mb-1 ml-auto mr-[18px]" width="104" height="14" viewBox="0 0 104 14" fill="none" stroke="#111">
          <path d="M1 7.500H11M46.500 5.500H53.500V12.500H46.500ZM48.500 5.500V3.500H55.500V10.500H53.500M92 2.500L102 12.500M102 2.500L92 12.500" />
        </svg>
      </div>
      <div className="flex h-5 shrink-0 items-center pl-2 pt-0.5 font-['Open_Sans',sans-serif] text-[12px] tracking-[-0.45px] text-black">
        {MENU.map(([a, k, b, w]) => <div key={a + k + b} className={w}>{a}<span className="underline underline-offset-2">{k}</span>{b}</div>)}
      </div>
      <Toolbar />
      <div className="relative flex min-h-0 flex-1">
        <SidePane />
        <div className="flex w-[1138px] shrink-0 border-l-2 border-t-2 border-[#4f7296] bg-white">
          <div className="relative ml-1 mt-1 flex w-[828px] shrink-0 flex-col border-x-2 border-t-2 border-[#c4c4c4] px-1">
            <div className="absolute -top-[6px] left-[467px] flex h-3 w-[50px] flex-col justify-center gap-[3px] rounded-b-sm bg-[#4f7296] px-[5px]"><div className="h-px bg-white" /><div className="h-px bg-white" /></div>
            <h1 className="h-[47px] whitespace-nowrap pl-1 font-['Noto_Sans',sans-serif] text-[20px] font-medium leading-[46px] tracking-[-0.18px] text-[#3c3c3c]">Map showing the houses in various metropolitan city</h1>
            <div className="relative">
              <MapView />
              <div className="absolute left-[10px] top-[10px] flex size-7 items-center justify-center border border-[#b3b3b3] bg-[#f5f5f5]/90">
                <svg width="14" height="14" viewBox="0 0 14 14" fill="none" stroke="#555" strokeWidth="1.400"><circle cx="8" cy="5.500" r="4" /><path d="M5 8.500L1.500 12" /></svg>
              </div>
              <div className="absolute left-[10px] top-[47px] flex h-[110px] w-7 flex-col items-center border border-[#b3b3b3] bg-[#f5f5f5]/90">
                <svg className="mt-2" width="10" height="10" viewBox="0 0 10 10"><path d="M5 0V10M0 5H10" stroke="#555" strokeWidth="1.800" /></svg>
                <svg className="mt-[15px]" width="10" height="10" viewBox="0 0 10 10"><path d="M0 5H10" stroke="#555" strokeWidth="1.800" /></svg>
                <div className="mt-[9px] flex h-[22px] w-[22px] items-center justify-center border border-[#adadad] bg-[#e2e2e2]">
                  <svg width="20" height="20" viewBox="0 0 20 20" fill="none" stroke="#444" strokeWidth="1.300"><path d="M6.500 1.500L12 4.500L10 5.500L9.500 9L10.500 11.500L2.500 9L5.500 7.500L7 4.500ZM5 10L2 14" /><path d="M12 11.500L18 17.500M18 11.500L12 17.500" strokeWidth="2" /></svg>
                </div>
                <div className="mt-[5px] h-px w-5 bg-[#d5d5d5]" />
                <svg className="mt-[10px]" width="7" height="10" viewBox="0 0 7 10"><path d="M0 0L6.500 5L0 10Z" fill="#555" /></svg>
              </div>
            </div>
          </div>
          <div className="w-[136px] shrink-0 overflow-hidden whitespace-nowrap pl-[2px] pt-[9px] font-['Noto_Sans',sans-serif] text-[12px] text-[#5a5a5a]">
            <div className="h-5 leading-5 text-[#333]">Location</div>
            {LEGEND.map(([t, c], i) => (
              <div key={i} className="flex h-5 items-center gap-[5px] pb-px pl-[3px]"><div className={`size-[14px] shrink-0 ${c}`} /><span className="pt-px">{t}</span></div>
            ))}
          </div>
          <div className="w-4 shrink-0 bg-[#eeeeee]" />
          <div className="w-3 shrink-0" />
          <div className="w-0.5 shrink-0 bg-[#4f7296]" />
          <div className="flex-1 bg-[#f4f4f4]" />
        </div>
        <div className="flex flex-1 flex-col items-end bg-[#efefef]">
          <div className="mt-[17px] h-[414px] w-full bg-[#a9a9a9]" />
          <svg className="mb-[6px] mr-1 mt-auto" width="9" height="6" viewBox="0 0 9 6"><path d="M1 1L4.500 4.500L8 1" fill="none" stroke="#555" strokeWidth="2" /></svg>
        </div>
        <ShowMe />
      </div>
      <BottomTabs />
    </div>
  );
}
